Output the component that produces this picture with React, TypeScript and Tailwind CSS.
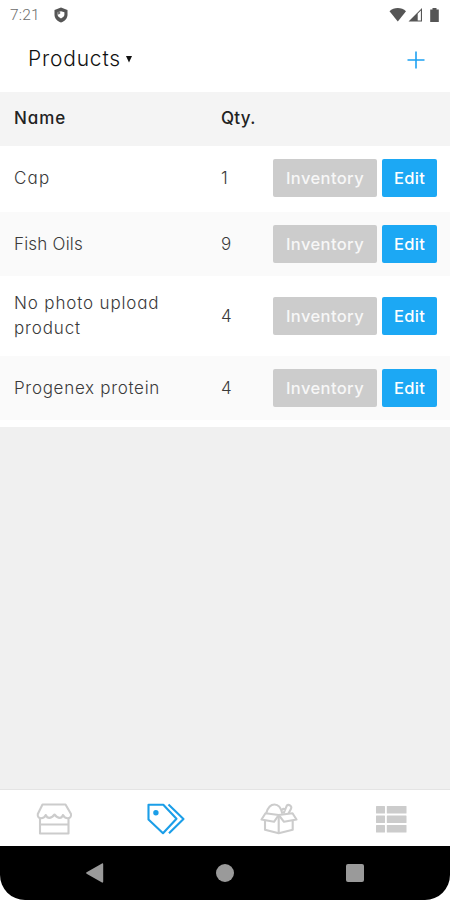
import { clsx } from 'clsx'

const PRODUCTS = [
  { name: 'Cap', qty: 1, height: 'h-[66px] pb-[2px]', tracking: 'tracking-[1.2px]' },
  { name: 'Fish Oils', qty: 9, height: 'h-16', tracking: 'tracking-[0.2px]' },
  { name: 'No photo upload product', qty: 4, height: 'h-20', tracking: 'tracking-[0.85px]' },
  { name: 'Progenex protein', qty: 4, height: 'h-16', tracking: 'tracking-[0.7px]' },
]

function StatusBar() {
  return (
    <div className="flex h-[30px] items-center pl-[10px] pr-[8px] text-[#6b6b6b]">
      <span className="pt-[2px] font-['Roboto',sans-serif] text-[15.5px] leading-none font-light tracking-[0.2px]">
        7:21
      </span>
      <svg width="14" height="16" viewBox="0 0 14 16" className="ml-[14px]" fill="none">
        <path d="M7 .5 13.5 3v4.7c0 3.6-2.7 6.4-6.500 7.800C3.200 14.100.5 11.300.5 7.700V3L7 .5Z" fill="#555" />
        <path d="M3.600 5.200 7 4.200l3.400 1v2.600c0 1.400-1.300 2.600-3.400 3.600-2.100-1-3.400-2.200-3.400-3.600V5.200Z" fill="#fff" />
        <path d="M3.600 4.800h2.600v2L3.600 7.800v-3Z" fill="#777" />
      </svg>
      <svg width="53" height="16" viewBox="0 0 53 16" className="ml-auto" fill="#555">
        <path d="M.5 4.200C5-.2 12.500-.2 17 4.200L8.800 14.500.5 4.200Z" />
        <path d="M19.500 14.500 33 1v13.500H19.500Zm9.200-1h3.200V3.600l-3.200 3.200v6.700Z" fillRule="evenodd" />
        <path d="M43.500 1h4v1.500h2.300V15H41.200V2.500h2.300V1Z" />
      </svg>
    </div>
  )
}

function StoreIcon() {
  return (
    <svg width="38" height="32" viewBox="0 0 38 32" fill="none" stroke="#ccc" strokeWidth="2.100" strokeLinejoin="round">
      <path d="M7.500 1.500h23l5.500 9.500c.5 3-1.300 4.200-3.300 4.200-2.200 0-3.700-.9-4.700-3.200-.8 2-1.900 2.900-3.300 2.900-2 0-3.600-1.300-5.200-3.400-1.600 2.100-3.200 3.400-5.200 3.400-1.600 0-2.700-.9-3.500-2.900-1 2.300-2.500 3.200-4.700 3.200-2 0-3.800-1.200-3.300-4.200l4.700-9.500Z" />
      <path d="M5 15v15.500h28.500V15M5 21.500h28.500" />
    </svg>
  )
}

function TagsIcon() {
  return (
    <svg width="40" height="32" viewBox="0 0 40 32" fill="none" stroke="#1b9ee8" strokeWidth="2.100" strokeLinejoin="round">
      <path d="M2.500 1.700h14.800l13.200 14-13.500 14.500L2.500 16.500V1.700Z" />
      <path d="m22.500 1.500 15 14.500-14.500 14.200" />
      <circle cx="9.900" cy="9.700" r="2.700" fill="#1b9ee8" stroke="none" />
    </svg>
  )
}

function BoxIcon() {
  return (
    <svg width="38" height="32" viewBox="0 0 38 32" fill="none" stroke="#ccc" strokeWidth="2.100" strokeLinejoin="round">
      <path d="M18.700 12 5.500 10.200 1.500 16.500l12.500 2.300 4.700-6.800Z" />
      <path d="M18.700 12 32.500 10.200l4 6.300-12.500 2.300-5.300-6.800Z" />
      <path d="M5 17.200v9.600l13.700 3.500 14-3.500v-9.600M18.700 13v17" />
      <path d="M6.300 10C8 4.200 11 1.500 14.500 1.500c3.700 0 6.400 2.600 7.900 9.200M23.500 10.500l3-7.200c.8-1.800 2.300-1.700 3.800-.7 1.300.9 1.200 2 .7 3.200l-2.500 4.700M25.600 6.500l-2.400-.8-1.600 1.500" />
    </svg>
  )
}

function ListIcon() {
  return (
    <svg width="31" height="27" viewBox="0 0 31 27" fill="#ccc">
      {[0, 9.500, 19].map((y) => (
        <g key={y}>
          <rect x="0" y={y} width="9" height="7.500" rx=".5" />
          <rect x="10.800" y={y} width="19.700" height="7.500" rx=".5" />
        </g>
      ))}
    </svg>
  )
}

function TabBar() {
  return (
    <nav className="grid h-[57px] grid-cols-4 border-t border-[#e4e4e4] bg-white pt-[2px]">
      <button type="button" aria-label="Store" className="flex items-center justify-center pr-[5px]">
        <StoreIcon />
      </button>
      <button type="button" aria-label="Products" className="flex items-center justify-center pr-[5px]">
        <TagsIcon />
      </button>
      <button type="button" aria-label="Orders" className="flex items-center justify-center pr-[5px]">
        <BoxIcon />
      </button>
      <button type="button" aria-label="More" className="flex items-center justify-center pr-[5px]">
        <ListIcon />
      </button>
    </nav>
  )
}

function SystemNav() {
  return (
    <div className="bg-white">
      <div className="flex h-[54px] items-center justify-between rounded-b-[25px] bg-black px-[86px]">
        <svg width="18" height="20" viewBox="0 0 18 20" fill="#9a9a9a">
          <path d="M16 .5c.7-.4 1.200 0 1.200.7v17.600c0 .7-.5 1.100-1.200.7L.6 10.700c-.6-.4-.6-1 0-1.400L16 .5Z" />
        </svg>
        <div className="size-[18px] rounded-full bg-[#9a9a9a]" />
        <div className="size-[18px] rounded-[2px] bg-[#9a9a9a]" />
      </div>
    </div>
  )
}

export default function App() {
  return (
    <div className="flex h-[900px] w-[450px] flex-col overflow-hidden bg-[#f0f0f0] font-['Inter','Liberation_Sans',sans-serif] text-[#3a3a3a] [font-feature-settings:'cv11']">
      <header className="h-[92px] bg-white">
        <StatusBar />
        <div className="flex h-[58px] items-center justify-between pr-[25px] pl-[28px]">
          <button type="button" className="flex items-center text-[21px] font-light tracking-[0.8px] text-[#111]">
            Products
            <svg width="6" height="7" viewBox="0 0 6 7" fill="#111" className="ml-[5px]">
              <path d="M0 0h6L3 6.500Z" />
            </svg>
          </button>
          <button type="button" aria-label="Add product">
            <svg width="18" height="18" viewBox="0 0 18 18" stroke="#1da1f2" strokeWidth="1.600" className="mt-[2px]">
              <path d="M9 .5v17M.5 9h17" />
            </svg>
          </button>
        </div>
      </header>

      <div className="flex h-[54px] shrink-0 items-center bg-[#f4f4f4] pl-[14px] text-[17px] font-medium text-[#222]">
        <span className="w-[207px] tracking-[0.9px]">Name</span>
        <span className="tracking-[0.3px]">Qty.</span>
      </div>

      <div className="bg-white pb-[7px]">
        {PRODUCTS.map((p, i) => (
          <div
            key={p.name}
            className={clsx('flex items-center pr-[13px] pl-[14px] text-[17px] font-light', p.height, i % 2 && 'bg-[#fafafa]')}
          >
            <div className={clsx('w-[170px] leading-[25px]', p.tracking)}>{p.name}</div>
            <div className="ml-[37px] w-[52px] leading-[25px]">{p.qty}</div>
            <button
              type="button"
              className="h-[38px] w-[104px] rounded-[2px] bg-[#ccc] text-[16.500px] font-medium tracking-[0.4px] text-[#f7f7f7]"
            >
              Inventory
            </button>
            <button
              type="button"
              className="ml-[5px] h-[38px] w-[55px] rounded-[2px] bg-[#1ca8f4] text-[16.500px] font-medium tracking-[0.3px] text-white"
            >
              Edit
            </button>
          </div>
        ))}
      </div>

      <div className="mt-auto">
        <TabBar />
        <SystemNav />
      </div>
    </div>
  )
}
